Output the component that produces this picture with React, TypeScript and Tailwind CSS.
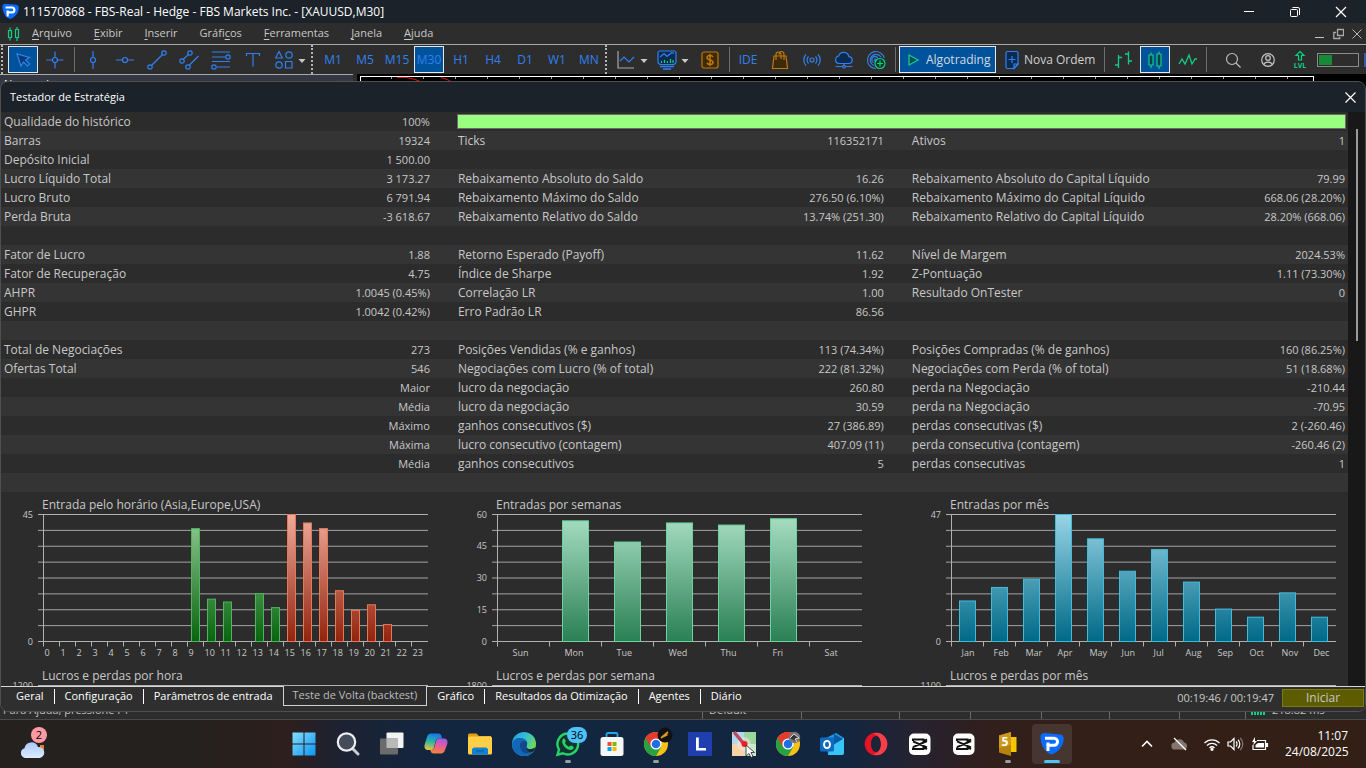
import React from "react";

type Kids = { children?: React.ReactNode };

const BLUE = "#2f81f0";
const GREEN = "#0fcf86";
const ORANGE = "#c27808";

/* ---------- toolbar ---------- */

function Glyph({ children, color = BLUE }: Kids & { color?: string }) {
  return (
    <svg width="24" height="24" viewBox="0 0 24 24" fill="none" stroke={color} strokeWidth="1.2" aria-hidden="true">
      {children}
    </svg>
  );
}

function Tool({ label, active, narrow, children }: Kids & { label: string; active?: boolean; narrow?: boolean }) {
  return (
    <div className={narrow ? "flex w-[29px] shrink-0 justify-center" : "flex w-8 shrink-0 justify-center"}>
      <button
        type="button"
        aria-label={label}
        className={
          active
            ? "flex h-[27px] w-[30px] items-center justify-center border border-gray-200 bg-[#00529b] text-[#2f81f0]"
            : "flex h-[27px] w-[29px] items-center justify-center text-[#2f81f0]"
        }
      >
        {children}
      </button>
    </div>
  );
}

function Caret() {
  return (
    <svg width="8" height="24" viewBox="0 0 8 24" className="shrink-0" aria-hidden="true">
      <path d="M0.5 11h7L4 15z" fill="#c9c9c9" />
    </svg>
  );
}

function Separator() {
  return <div className="ml-[3px] mr-[2px] h-[25px] w-px shrink-0 bg-[#6d6d6d]" />;
}

function Grip() {
  return <div className="h-[29px] w-0 shrink-0 border-l-2 border-dotted border-[#b5b5b5]" />;
}

const frames = ["M1", "M5", "M15", "M30", "H1", "H4", "D1", "W1", "MN"];

function Toolbar() {
  return (
    <div className="flex h-[29px] shrink-0 items-center overflow-hidden bg-[#2d2d2d] pl-px">
      <Grip />
      <div className="w-1 shrink-0" />
      <Tool label="Cursor" active>
        <Glyph><path d="M6 6l4 12 2.500-4 4 4 2-2-4-4 4-2.500z" fill="#0a3a70" /></Glyph>
      </Tool>
      <Tool label="Mira">
        <Glyph><path d="M12 3.500v6M12 14.500v6M3.500 12h6M14.500 12h6" /><circle cx="12" cy="12" r="2.500" /></Glyph>
      </Tool>
      <Separator />
      <Tool label="Linha vertical">
        <Glyph><path d="M12 3v6.500M12 14.500v6.500" /><circle cx="12" cy="12" r="2.500" /></Glyph>
      </Tool>
      <Tool label="Linha horizontal">
        <Glyph><path d="M3 12h6.500M14.500 12h6.500" /><circle cx="12" cy="12" r="2.500" /></Glyph>
      </Tool>
      <Tool label="Linha de tendência">
        <Glyph><path d="M6.500 17.500l11-11" /><circle cx="5" cy="19" r="2.200" /><circle cx="19" cy="5" r="2.200" /></Glyph>
      </Tool>
      <Tool label="Canal equidistante">
        <Glyph>
          <path d="M6 11.500l5.500-5M12.500 17l9-9" />
          <circle cx="5" cy="13" r="2.200" /><circle cx="13" cy="5" r="2.200" /><circle cx="11" cy="19" r="2.200" />
        </Glyph>
      </Tool>
      <Tool label="Fibonacci">
        <Glyph>
          <path d="M3 4h18M3 9h13.500M3 13.500h18M8 19h13" />
          <circle cx="19" cy="9" r="2.200" /><circle cx="5" cy="19" r="2.200" />
        </Glyph>
      </Tool>
      <Tool label="Texto">
        <Glyph><path d="M5.500 8V5.500h13V8M12 5.500V18.500" /></Glyph>
      </Tool>
      <Tool label="Objetos" narrow>
        <Glyph>
          <path d="M7 3.500l3.300 6.500H3.700zM13.500 13.500h6.500v6.500h-6.500z" />
          <circle cx="17" cy="7" r="3.200" /><circle cx="7" cy="17" r="3.200" />
        </Glyph>
      </Tool>
      <Caret />
      <div className="w-[5px] shrink-0" />
      <Grip />
      <div className="w-1 shrink-0" />
      {frames.map((f) => (
        <Tool key={f} label={f} active={f === "M30"}>
          <span className="text-[12px]">{f}</span>
        </Tool>
      ))}
      <Grip />
      <div className="w-1 shrink-0" />
      <Tool label="Tipo de gráfico" narrow>
        <Glyph><path d="M4 3v17h16" stroke="#a8a8a8" /><path d="M6 13l4-4 5 5 5-5" /></Glyph>
      </Tool>
      <Caret />
      <div className="w-1 shrink-0" />
      <Tool label="Indicadores" narrow>
        <Glyph>
          <path d="M3 5a2 2 0 012-2h14a2 2 0 012 2v9.500c0 1-2 2-3 2H6c-1 0-3-1-3-2z" fill="#0b2c50" />
          <path d="M5 9l4-3.500 3 3 5-4 2 1" />
          <path d="M6.500 15v-2M9.500 15v-3M12.500 15v-2M15.500 15v-4M18 15v-3" stroke={GREEN} />
          <path d="M5 18.500h14M8 21h8" strokeWidth="1.600" />
        </Glyph>
      </Tool>
      <Caret />
      <div className="w-[5px] shrink-0" />
      <Tool label="Cotações">
        <Glyph color={ORANGE}>
          <rect x="4" y="4" width="16" height="16" rx="2" fill="#3d2a08" />
          <path d="M15 9c-.5-1-1.500-1.500-3-1.500S9 8.300 9 9.700c0 3 6 1.500 6 4.500 0 1.500-1.500 2.300-3 2.300S9.300 16 9 14.800M12 5.800v12.400" strokeWidth="1.500" />
        </Glyph>
      </Tool>
      <Separator />
      <Tool label="IDE"><span className="text-[12px]">IDE</span></Tool>
      <Tool label="Mercado">
        <Glyph color={ORANGE}>
          <path d="M6 8h12l1.500 12.500h-15z" fill="#3d2a08" />
          <path d="M8 12V6.500a2.500 2.500 0 015 0V11M11 6.500c0-4 5-4 5 0V12" />
        </Glyph>
      </Tool>
      <Tool label="Sinais">
        <Glyph>
          <circle cx="12" cy="12" r="2" />
          <path d="M8.500 8.500a5 5 0 000 7M15.500 8.500a5 5 0 010 7M6 6.500a8 8 0 000 11M18 6.500a8 8 0 010 11" />
        </Glyph>
      </Tool>
      <Tool label="Hospedagem virtual">
        <Glyph>
          <path d="M7 15.500a3.800 3.800 0 01-.3-7.500 5.300 5.300 0 0110.200.6A3.500 3.500 0 0117.500 15.500z" fill="#0b2c50" />
          <path d="M12 15.500v2M3.500 18.500h7M13.500 18.500h7" /><circle cx="12" cy="18.700" r="1.300" />
        </Glyph>
      </Tool>
      <Tool label="Cópia de sinais">
        <Glyph>
          <path d="M12 20.500A8.500 8.500 0 1120.200 10M10 17.500a5.800 5.800 0 117-8.500M9.500 14.500a3.200 3.200 0 114.500-4" />
          <circle cx="11.500" cy="12" r="1" />
          <circle cx="16" cy="15.500" r="5" stroke={GREEN} fill="#0c3a29" />
          <path d="M16 12.500v6M13 15.500h6" stroke={GREEN} />
        </Glyph>
      </Tool>
      <Separator />
      <button
        type="button"
        className="ml-px flex h-[27px] w-[97px] shrink-0 items-center gap-[6px] border border-gray-200 bg-[#00529b] pl-[7px] text-[12px] text-[#d5dbe0]"
      >
        <svg width="13" height="14" viewBox="0 0 13 14" fill="#0d4a57" stroke={GREEN} strokeWidth="1.300" aria-hidden="true">
          <path d="M2 2l9 5-9 5z" />
        </svg>
        Algotrading
      </button>
      <button type="button" className="ml-1 flex h-[27px] w-[101px] shrink-0 items-center text-[12px] text-[#d0d0d0]">
        <Glyph>
          <path d="M6 5a1.500 1.500 0 011.500-1.500h9A1.500 1.500 0 0118 5v11l-4 4.500H7.500A1.500 1.500 0 016 19z" fill="#0b2c50" />
          <path d="M18 16h-4v4.500zM12 8v7M8.500 11.500h7" />
        </Glyph>
        Nova Ordem
      </button>
      <Separator />
      <Tool label="Gráfico de barras">
        <Glyph color={GREEN}><path d="M7.500 7v13M4 17h3.500M7.500 9.500H11M17.500 3.500v13M14 6h3.500M17.500 13H21" strokeWidth="1.300" /></Glyph>
      </Tool>
      <Tool label="Gráfico de velas" active>
        <Glyph color={GREEN}>
          <path d="M6 7h4v10H6zM14 6h4v12h-4z" fill="#0b3f53" /><path d="M8 4.500V7M8 17v3M16 3.500V6M16 18v3" />
        </Glyph>
      </Tool>
      <Tool label="Gráfico de linha">
        <Glyph color={GREEN}><path d="M4 16l3-5 3 5 4-9 3 9 3-5h2" strokeWidth="1.300" /></Glyph>
      </Tool>
      <Separator />
      <div className="w-2 shrink-0" />
      <Tool label="Pesquisar">
        <Glyph color="#bdbdbd"><circle cx="11" cy="11" r="5.500" /><path d="M15 15l4.500 4.500" /></Glyph>
      </Tool>
      <div className="w-[3px] shrink-0" />
      <Tool label="Conta">
        <Glyph color="#c4c4c4"><circle cx="12" cy="12" r="6.300" /><circle cx="12" cy="10" r="2.300" /><path d="M7.800 16.500c1-3.300 7.400-3.300 8.400 0" /></Glyph>
      </Tool>
      <Tool label="Nível">
        <svg width="24" height="24" viewBox="0 0 24 24" fill="none" stroke={GREEN} strokeWidth="1.200" aria-hidden="true">
          <path d="M12 3.500l4 4h-2.500V12h-3V7.500H8z" fill="#0c3a29" />
          <text x="12" y="20" textAnchor="middle" fontSize="7" fill={GREEN} stroke="none" fontWeight="700">LVL</text>
        </svg>
      </Tool>
      <div className="ml-px h-[14px] w-[42px] shrink-0 border border-[#8b8b8b] p-px">
        <div className="h-full w-[35%] bg-[#178a3a]" />
      </div>
      <div className="ml-auto h-[14px] w-[2px] bg-[#2d5ea5]" />
    </div>
  );
}

/* ---------- title and menu ---------- */

function Shield({ size }: { size: number }) {
  return (
    <svg width={size} height={size} viewBox="0 0 24 24" aria-hidden="true">
      <path d="M.5 4.500C.5 2 2.500.8 5 1l15 1.500c3 .3 4 2.500 3.600 5.500-.8 6-4.600 12-12.100 14.500C4.500 21 .5 12 .5 4.500z" fill="#0a6bff" />
      <path d="M5 6.300h9c4.700 0 4.700 7 0 7H8v5.700" fill="none" stroke="#fff" strokeWidth="3" />
      <path d="M6.500 10.500h3v3h-3z" fill="#fff" />
    </svg>
  );
}

function TitleBar() {
  return (
    <header className="flex h-[23px] shrink-0 items-center bg-[#1b222a] px-[2px] text-white">
      <Shield size={17} />
      <h1 className="ml-1 text-[12px]">111570868 - FBS-Real - Hedge - FBS Markets Inc. - [XAUUSD,M30]</h1>
      <div className="ml-auto flex items-center">
        <button type="button" aria-label="Minimizar" className="flex w-[46px] justify-center">
          <svg width="12" height="12" viewBox="0 0 12 12" stroke="#fff"><path d="M1 5.500h10" /></svg>
        </button>
        <button type="button" aria-label="Restaurar" className="flex w-[46px] justify-center">
          <svg width="12" height="12" viewBox="0 0 12 12" stroke="#fff" fill="none"><rect x="1.500" y="3.500" width="7" height="7" rx="1" /><path d="M3.500 1.500H9a1.500 1.500 0 011.500 1.500v6" /></svg>
        </button>
        <button type="button" aria-label="Fechar" className="flex w-[46px] justify-center">
          <svg width="12" height="12" viewBox="0 0 12 12" stroke="#fff" strokeWidth="1.200"><path d="M1 1l10 10M11 1L1 11" /></svg>
        </button>
      </div>
    </header>
  );
}

const menus: [string, string, string][] = [
  ["", "A", "rquivo"], ["", "E", "xibir"], ["", "I", "nserir"], ["Gráfi", "c", "os"],
  ["", "F", "erramentas"], ["", "J", "anela"], ["", "A", "juda"],
];

function MenuBar() {
  return (
    <nav className="flex h-[22px] shrink-0 items-center border-b border-[#a9a9a9] bg-[#2d2d2d] pl-[7px] pr-1 text-[11px] text-[#c8c8c8]">
      <svg width="13" height="14" viewBox="0 0 13 14" fill="none" stroke={GREEN} strokeWidth="1.200" aria-hidden="true">
        <path d="M1.500 3.500h3v7h-3zM8.500 2.500h3v8h-3zM3 .5v3M3 10.500v3M10 0v2.500M10 10.500V14" />
      </svg>
      <div className="ml-3 flex gap-[22px]">
        {menus.map(([a, u, b]) => (
          <button type="button" key={a + u + b}>
            {a}<span className="underline underline-offset-2">{u}</span>{b}
          </button>
        ))}
      </div>
      <div className="ml-auto flex items-center gap-2">
        <button type="button" aria-label="Minimizar gráfico">
          <svg width="11" height="12" viewBox="0 0 11 12" stroke="#c4c4c4"><path d="M1 9.500h9" /></svg>
        </button>
        <button type="button" aria-label="Restaurar gráfico">
          <svg width="11" height="12" viewBox="0 0 11 12" fill="none" stroke="#a9a9a9" strokeWidth="1.300"><path d="M4.500 1.500h6v6h-6zM3 4.500H.8v6h6V9" /></svg>
        </button>
        <button type="button" aria-label="Fechar gráfico">
          <svg width="10" height="12" viewBox="0 0 10 12" stroke="#b4b4b4"><path d="M.5 1.500l9 9M9.500 1.500l-9 9" /></svg>
        </button>
      </div>
    </nav>
  );
}

/* ---------- report ---------- */

type Row = [string, string, string, string, string, string];

const rows: Row[] = [
  ["Barras", "19324", "Ticks", "116352171", "Ativos", "1"],
  ["Depósito Inicial", "1 500.00", "", "", "", ""],
  ["Lucro Líquido Total", "3 173.27", "Rebaixamento Absoluto do Saldo", "16.26", "Rebaixamento Absoluto do Capital Líquido", "79.99"],
  ["Lucro Bruto", "6 791.94", "Rebaixamento Máximo do Saldo", "276.50 (6.10%)", "Rebaixamento Máximo do Capital Líquido", "668.06 (28.20%)"],
  ["Perda Bruta", "-3 618.67", "Rebaixamento Relativo do Saldo", "13.74% (251.30)", "Rebaixamento Relativo do Capital Líquido", "28.20% (668.06)"],
  ["", "", "", "", "", ""],
  ["Fator de Lucro", "1.88", "Retorno Esperado (Payoff)", "11.62", "Nível de Margem", "2024.53%"],
  ["Fator de Recuperação", "4.75", "Índice de Sharpe", "1.92", "Z-Pontuação", "1.11 (73.30%)"],
  ["AHPR", "1.0045 (0.45%)", "Correlação LR", "1.00", "Resultado OnTester", "0"],
  ["GHPR", "1.0042 (0.42%)", "Erro Padrão LR", "86.56", "", ""],
  ["", "", "", "", "", ""],
  ["Total de Negociações", "273", "Posições Vendidas (% e ganhos)", "113 (74.34%)", "Posições Compradas (% de ganhos)", "160 (86.25%)"],
  ["Ofertas Total", "546", "Negociações com Lucro (% of total)", "222 (81.32%)", "Negociações com Perda (% of total)", "51 (18.68%)"],
  ["", "Maior", "lucro da negociação", "260.80", "perda na Negociação", "-210.44"],
  ["", "Média", "lucro da negociação", "30.59", "perda na Negociação", "-70.95"],
  ["", "Máximo", "ganhos consecutivos ($)", "27 (386.89)", "perdas consecutivas ($)", "2 (-260.46)"],
  ["", "Máxima", "lucro consecutivo (contagem)", "407.09 (11)", "perda consecutiva (contagem)", "-260.46 (2)"],
  ["", "Média", "ganhos consecutivos", "5", "perdas consecutivas", "1"],
  ["", "", "", "", "", ""],
];

function Report() {
  return (
    <table className="w-full table-fixed border-collapse whitespace-nowrap text-[11px] leading-[19px]">
      <colgroup>
        <col className="w-[21%]" />
        <col className="w-[12.7%]" />
        <col className="w-[21%]" />
        <col className="w-[12.7%]" />
        <col className="w-[21%]" />
        <col />
      </colgroup>
      <tbody>
        <tr className="h-[19px]">
          <th scope="row" className="pl-[3px] text-left text-[12px] font-normal">Qualidade do histórico</th>
          <td className="pr-[25px] text-right">100%</td>
          <td colSpan={4} className="pl-[2px] pr-[2px]">
            <div className="h-[15px] border border-[#6a6a6a] bg-[#98ff80]" />
          </td>
        </tr>
        {rows.map((r, i) => (
          <tr key={i} className="h-[19px] odd:bg-[#2c2c2c] even:bg-[#343434]">
            <th scope="row" className="pl-[3px] text-left text-[12px] font-normal">{r[0]}</th>
            <td className="pr-[25px] text-right">{r[1]}</td>
            <td className="pl-[3px] text-[12px]">{r[2]}</td>
            <td className="pr-[25px] text-right">{r[3]}</td>
            <td className="pl-[3px] text-[12px]">{r[4]}</td>
            <td className="pr-[3px] text-right">{r[5]}</td>
          </tr>
        ))}
      </tbody>
    </table>
  );
}

/* ---------- charts ---------- */

type Tone = { id: string; top: string; bottom: string; edge: string };
type Bar = { label: string; value: number; tone?: Tone };

const green: Tone = { id: "tone-green", top: "#93cc97", bottom: "#08640f", edge: "#4db65a" };
const red: Tone = { id: "tone-red", top: "#efab9c", bottom: "#93230c", edge: "#e8775a" };
const mint: Tone = { id: "tone-mint", top: "#a9dfc4", bottom: "#2a8054", edge: "#6bd39c" };
const cyan: Tone = { id: "tone-cyan", top: "#96d5e5", bottom: "#006988", edge: "#45b9dc" };

const TOP = 22.5;
const SPAN = 127;

type ChartProps = {
  title: string; bars: Bar[]; tone: Tone; step: number; inset: number; labelInset: number; max: number; ticks: number[];
};

function Chart({ title, bars, tone, step, inset, labelInset, max, ticks }: ChartProps) {
  const x0 = 42.5;
  const end = x0 + bars.length * step;
  const base = TOP + SPAN;
  return (
    <svg width="440" height="171" viewBox="0 0 440 171" className="block" fill="#c8c8c8" fontSize="9" role="img" aria-label={title}>
      <defs>
        {[green, red, mint, cyan].map((t) => (
          <linearGradient key={t.id} id={t.id} gradientUnits="userSpaceOnUse" x1="0" y1={TOP} x2="0" y2={base}>
            <stop offset="0" stopColor={t.top} />
            <stop offset="1" stopColor={t.bottom} />
          </linearGradient>
        ))}
      </defs>
      <text x="41" y="17" fontSize="12">{title}</text>
      {Array.from({ length: 9 }, (_, i) => (
        <path key={i} d={`M37 ${TOP + (i * SPAN) / 8}H${end + 0.5}`} stroke={i === 0 || i === 8 ? "#b0b0b0" : "#a4a4a4"} />
      ))}
      <path d={`M${x0} ${TOP}V${base}`} stroke="#b0b0b0" />
      {ticks.map((t) => (
        <text key={t} x="32" y={base + 3 - (t / max) * SPAN} textAnchor="end">{t}</text>
      ))}
      {bars.map((b, i) => {
        const x = x0 + i * step;
        const t = b.tone ?? tone;
        const h = (b.value / max) * SPAN;
        return (
          <g key={i}>
            <path d={`M${x} ${base}v5`} stroke="#b0b0b0" />
            {b.value > 0 && (
              <rect x={x + inset} y={base - h} width={step - 2 * inset} height={h} fill={`url(#${t.id})`} stroke={t.edge} />
            )}
            {b.label && <text x={x + labelInset} y="164">{b.label}</text>}
          </g>
        );
      })}
    </svg>
  );
}

const hourValues = [0, 0, 0, 0, 0, 0, 0, 0, 0, 40, 15, 14, 0, 17, 12, 45, 42, 40, 18, 11, 13, 6, 0, 0];
const hours: Bar[] = hourValues.map((value, i) => ({ label: String(i), value, tone: i >= 15 ? red : green }));
const toBars = (names: string[], values: number[]): Bar[] => names.map((label, i) => ({ label, value: values[i] ?? 0 }));
const emptyBars = (n: number): Bar[] => Array.from({ length: n }, () => ({ label: "", value: 0 }));
const days = ["Sun", "Mon", "Tue", "Wed", "Thu", "Fri", "Sat"];
const months = ["Jan", "Feb", "Mar", "Apr", "May", "Jun", "Jul", "Aug", "Sep", "Oct", "Nov", "Dec"];

const charts: ChartProps[] = [
  { title: "Entrada pelo horário (Asia,Europe,USA)", bars: hours, tone: green, step: 16, inset: 4, labelInset: 1, max: 45, ticks: [45, 0] },
  { title: "Entradas por semanas", bars: toBars(days, [0, 57, 47, 56, 55, 58, 0]), tone: mint, step: 52, inset: 13, labelInset: 15, max: 60, ticks: [60, 45, 30, 15, 0] },
  { title: "Entradas por mês", bars: toBars(months, [15, 20, 23, 47, 38, 26, 34, 22, 12, 9, 18, 9]), tone: cyan, step: 32, inset: 8, labelInset: 10, max: 47, ticks: [47, 0] },
  { title: "Lucros e perdas por hora", bars: emptyBars(24), tone: green, step: 16, inset: 4, labelInset: 1, max: 1200, ticks: [1200] },
  { title: "Lucros e perdas por semana", bars: emptyBars(7), tone: mint, step: 52, inset: 13, labelInset: 15, max: 1800, ticks: [1800] },
  { title: "Lucros e perdas por mês", bars: emptyBars(12), tone: cyan, step: 32, inset: 8, labelInset: 10, max: 1100, ticks: [1100] },
];

/* ---------- strategy tester dialog ---------- */

const tabs = [
  "Geral", "Configuração", "Parâmetros de entrada", "Teste de Volta (backtest)", "Gráfico",
  "Resultados da Otimização", "Agentes", "Diário",
];
const activeTab = 3;

function Tester() {
  return (
    <section
      aria-label="Testador de Estratégia"
      className="absolute inset-x-0 bottom-2 top-[7px] flex flex-col overflow-hidden rounded-lg border border-[#505050] bg-[#2c2c2c] text-[#c8c8c8]"
    >
      <div className="flex h-[30px] shrink-0 items-center bg-[#1b222a] pl-[9px] pr-[9px] text-white">
        <h2 className="text-[11px]">Testador de Estratégia</h2>
        <button type="button" aria-label="Fechar testador" className="ml-auto">
          <svg width="11" height="11" viewBox="0 0 11 11" stroke="#fff" strokeWidth="1.200" className="block"><path d="M.5.5l10 10M10.500.5l-10 10" /></svg>
        </button>
      </div>
      <div className="flex min-h-0 flex-1">
        <div className="min-w-0 flex-1 overflow-hidden">
          <Report />
          <div className="grid grid-cols-[33.7%_33.7%_32.6%] overflow-hidden">
            {charts.map((c) => <Chart key={c.title} {...c} />)}
          </div>
        </div>
        <div className="flex w-[17px] shrink-0 justify-center bg-[#181818] pt-[17px]">
          <div className="h-[38%] w-[2px] bg-[#9a9a9a]" />
        </div>
      </div>
      <div className="flex h-[25px] shrink-0 items-start border-t border-[#d8d8d8] bg-[#2f2f2f] pl-[5px]">
        <div role="tablist" className="flex text-[11px] text-white">
          {tabs.map((t, i) =>
            i === activeTab ? (
              <button key={t} type="button" role="tab" aria-selected="true" className="-mt-px h-5 border-x border-b border-[#d0d0d0] bg-[#2c2c2c] px-[9px] text-[#bdbdbd]">
                {t}
              </button>
            ) : (
              <div key={t} className="flex items-center">
                <button type="button" role="tab" aria-selected="false" className="h-[19px] px-[10px]">{t}</button>
                {i !== activeTab - 1 && i !== tabs.length - 1 && <div className="h-[15px] w-px bg-white" />}
              </div>
            )
          )}
        </div>
        <div className="ml-auto mt-[2px] flex items-center pr-px text-[12px]">
          <span className="pr-2 text-[11px]">00:19:46 / 00:19:47</span>
          <button type="button" className="flex h-[18px] w-[82px] items-center justify-center border border-[#7c7c00] bg-[#5e5c00]">Iniciar</button>
        </div>
      </div>
    </section>
  );
}

/* ---------- workspace behind the dialog ---------- */

function Workspace() {
  return (
    <main className="relative flex min-h-0 flex-1 flex-col bg-[#2d2d2d]">
      <div className="flex min-h-0 flex-1 gap-1">
        <div className="flex w-[353px] shrink-0 items-start justify-between overflow-hidden border-t border-[#a9a9a9] bg-[#343843] pl-1 pr-[5px] text-[11px] leading-[18px] text-white">
          Navegador <span>✕</span>
        </div>
        <div className="flex-1 overflow-hidden bg-black pl-[3px] pr-[52px] pt-[2px]">
          <div className="h-full border-x border-t border-white">
            <svg width="952" height="6" viewBox="0 0 952 6" fill="none" aria-hidden="true">
              {Array.from({ length: 29 }, (_, i) => <path key={i} d={`M${30.5 + i * 32} 0v2`} stroke="#aaa" />)}
              <path d="M36 .5h10l8 2 8 3M80 .5l6 2 6 3" stroke="#f00" />
            </svg>
          </div>
        </div>
      </div>
      <footer className="flex h-5 shrink-0 overflow-hidden border-b border-[#4a4a4a] text-[12px] leading-5 text-[#c0c0c0]">
        <span className="flex-1 pl-[3px] text-[11px]">Para Ajuda, pressione F1</span>
        <span className="w-[99px] border-l border-[#6a6a6a] pl-[6px] text-[11px]">Default</span>
        <span className="w-[98px] border-l border-[#6a6a6a]" />
        <span className="w-[71px] border-l border-[#6a6a6a]" />
        <span className="w-[71px] border-l border-[#6a6a6a]" />
        <span className="w-[68px] border-l border-[#6a6a6a]" />
        <span className="w-[70px] border-l border-[#6a6a6a]" />
        <span className="w-[66px] border-l border-[#6a6a6a]" />
        <span className="flex w-[121px] items-center gap-[6px] border-l border-[#6a6a6a] pl-[5px] text-[11px]">
          <svg width="15" height="12" viewBox="0 0 15 12" stroke={GREEN} strokeWidth="2"><path d="M1 7v4M4 6v5M7 4v7M10 2v9M13 0v11" /></svg>
          218.82 ms
        </span>
      </footer>
      <Tester />
    </main>
  );
}

/* ---------- taskbar ---------- */

function Chrome() {
  return (
    <>
      <circle cx="12" cy="12" r="12" fill="#fbc116" />
      <path d="M12 12L1.600 6A12 12 0 0122.400 6z" fill="#e33b2e" />
      <path d="M12 12L1.600 6A12 12 0 0012 24l5.200-9z" fill="#27a243" />
      <path d="M12 6h10.400A12 12 0 001.600 6l5.200 9z" fill="#e33b2e" />
      <circle cx="12" cy="12" r="5.600" fill="#fff" />
      <circle cx="12" cy="12" r="4.300" fill="#1d6fe8" />
    </>
  );
}

function CapCut() {
  return (
    <>
      <rect x="1" y="1.500" width="21.500" height="21.500" rx="5" fill="#fff" />
      <path d="M5 9V7.500h10.500v1.800L19 7.300M5 15.500V17h10.500v-1.800l3.500 2M5 9.300l14 6.200M5 15.200L19 9" fill="none" stroke="#111" strokeWidth="2" />
    </>
  );
}

const apps: { name: string; dot?: boolean; badge?: string; focused?: boolean; art: React.ReactNode }[] = [
  { name: "Iniciar Windows", art: <g fill="url(#g-win)"><path d="M.5.5h11v11H.5zM12.500.5h11v11h-11zM.5 12.500h11v11H.5zM12.500 12.500h11v11h-11z" /></g> },
  { name: "Pesquisa", art: <><path d="M17 17l5 5" stroke="#c9ccd3" strokeWidth="3" strokeLinecap="round" /><circle cx="10.500" cy="10" r="8.700" fill="#444b59" stroke="#eceef0" strokeWidth="2.200" /></> },
  { name: "Visão de tarefas", art: <><rect x="6.500" y=".5" width="17" height="15.500" rx="1" fill="#f3f3f3" /><rect y="6.500" width="18" height="16" rx="1" fill="#6b6b6b" /><path d="M6.500 6.500H18V16H6.500z" fill="#b9b9b9" /></> },
  { name: "Copilot", art: <><path d="M7 1.500h7c2.500 0 3 1 3.500 3l.5 2h-3.500c-2 0-2.500 1-3 3l-1.500 6c-.6 2-1.500 2.500-3.500 2.500H4c-3 0-4-2.500-3.300-5.500L3 5c.6-2 2-3.500 4-3.500z" fill="url(#g-cop1)" /><path d="M17 21.500h-7c-2.500 0-3-1-3.500-3l-.2-.7c2.500.2 3.700-.8 4.200-2.800l1.500-6c.6-2 1.500-2.500 3.500-2.500H20c3 0 4 2.500 3.300 5.500L21 18c-.6 2-2 3.500-4 3.500z" fill="url(#g-cop2)" /></> },
  { name: "Explorador de Arquivos", art: <><path d="M0 3a1.500 1.500 0 011.500-1.500h7L11 4h12v6H0z" fill="#e0a10c" /><rect y="4.500" width="24" height="18" rx="1.500" fill="#ffcf48" /><path d="M4 22.500V18a2.500 2.500 0 012.500-2.500h11A2.500 2.500 0 0120 18v4.500z" fill="#1080d4" /><path d="M8 19h8" stroke="#075a9c" /></> },
  { name: "Edge", art: <><circle cx="12" cy="12" r="12" fill="url(#g-edge)" /><path d="M0 12c1-5 5-6.500 9-6 5 .5 7 4 6 7-.7 1.500-1 3.500 2 4 2.500.4 4.500-.5 6-1.500C21 21.500 17 24 12 24 5 24 0 19 0 12z" fill="#1267b8" /><path d="M8 13c0-2.500 2-4 4-4 2.500 0 3.500 2 3 4-.7 1.500-1 3.500 2 4 2 .3 3.700 0 5-.8-3 4.300-6 5.300-9 4.800-3-.6-5-4-5-8z" fill="#114a8b" /><path d="M15 13c-1.500 3 .5 4.500 3 4.300 2.500 0 5-1.500 5.500-2.300l-1.500 4-3 1.500c-4-1-5.500-4-4-7.500z" fill="#14283e" /></> },
  { name: "WhatsApp", dot: true, badge: "36", art: <><path d="M12 1.500a10.500 10.500 0 00-9 16L1.500 22.700l5.300-1.400A10.500 10.500 0 1012 1.500z" fill="#12352f" stroke="#25d366" strokeWidth="2.400" /><path d="M8 6.500c1 0 1.500 2 1.800 2.800.2.700-1 1.300-.8 1.800.8 1.600 2.300 3 4 3.700.7.200 1.300-1.500 2-1.200 1 .4 2.700 1.200 2.700 1.700 0 2-2 3-3.700 2.700C10 17.200 6.500 13.500 6.200 9.700 6.100 8 7 6.500 8 6.500z" fill="#25d366" /></> },
  { name: "Microsoft Store", art: <><path d="M6.500 6V2.500A1.500 1.500 0 018 1h8a1.500 1.500 0 011.500 1.500V6" fill="none" stroke="#22a7ec" strokeWidth="1.800" /><rect x=".5" y="5" width="23" height="19" rx="2.500" fill="#f7f7f7" /><path d="M7.500 10h4v4h-4z" fill="#f25022" /><path d="M12.500 10h4v4h-4z" fill="#7fba00" /><path d="M7.500 15h4v4h-4z" fill="#00a4ef" /><path d="M12.500 15h4v4h-4z" fill="#ffb900" /></> },
  { name: "Chrome", dot: true, art: <><Chrome /><circle cx="21" cy="3" r="7.500" fill="#111" /><path d="M17 6l7-6M18.500 5l5-2.500" stroke="#d69a28" strokeWidth="1.700" /></> },
  { name: "Lightshot", art: <><rect width="24" height="24" fill="#1f3fae" /><path d="M8 18.500V5.500h2.800V16H18v2.500z" fill="#fff" /></> },
  { name: "Gravador de cliques", art: <><rect width="24" height="24" fill="#f9d3a4" /><path d="M12 0h12v12H12z" fill="#9bd79c" /><path d="M0 0h12v12H0z" fill="#b4d6ef" /><path d="M12 12h12v12H12z" fill="#cfe6cb" /><circle cx="12" cy="12" r="7" fill="#f5e9e2" opacity=".5" /><path d="M2 0l10 12" stroke="#b84b5d" strokeWidth="3.500" /><circle cx="12.500" cy="12" r="3" fill="#f11d26" /><path d="M14 13v11l3-2.500 2 4 2-1-2-4h3.500z" fill="#fff" stroke="#222" strokeWidth=".8" /></> },
  { name: "Chrome perfil 2", art: <><Chrome /><circle cx="18.500" cy="5.500" r="5.700" fill="#777" /><path d="M14 6l4-4 5 4-4 1 2 3" stroke="#ddd" fill="#333" /></> },
  { name: "Outlook", art: <><path d="M6 6l10-5 8 5v14a3 3 0 01-3 3H8z" fill="#199be8" /><path d="M12 12l12-6v15a2 2 0 01-2 2H8z" fill="#36c5f5" /><path d="M14 2l9 5-10 6z" fill="#0c59a8" /><rect y="5.500" width="14" height="14" rx="1.500" fill="#0d6bc2" /><ellipse cx="7" cy="12.500" rx="3" ry="3.600" fill="none" stroke="#fff" strokeWidth="1.900" /></> },
  { name: "Opera", art: <><path fillRule="evenodd" d="M12 .7a11.300 11.300 0 100 22.600A11.300 11.300 0 1012 .7zm0 3.300c3 0 5 3.500 5 8s-2 8-5 8-5-3.500-5-8 2-8 5-8z" fill="#e81426" /><path d="M12 .7a11.300 11.300 0 010 22.600c-1.600 0-3-.4-4.300-1 1.500.5 3 .2 4.300-1 3-1.500 5-5 5-9.300S15 4.200 12 2.700c-1.300-1.200-2.800-1.500-4.300-1A11 11 0 0112 .7z" fill="#f5404c" /></> },
  { name: "CapCut", art: <CapCut /> },
  { name: "CapCut 2", art: <CapCut /> },
  { name: "MetaTrader 5", dot: true, art: <><path d="M12 5h8.500v15H12z" fill="#f7c600" /><path d="M3 3.500L15 0v24L3 20.500z" fill="#b5830e" /><path d="M3 3.500L15 0v13L3 16z" fill="#cf9a1c" /><text x="9" y="13.500" textAnchor="middle" fontSize="12" fontWeight="700" fill="#fff">5</text></> },
  { name: "FBS MetaTrader", focused: true, art: <Shield size={24} /> },
];

function Taskbar() {
  return (
    <footer className="flex h-12 shrink-0 items-center bg-[linear-gradient(90deg,#24211e_0%,#24211e_14%,#2d1f1d_21%,#1c2232_25%,#13263f_31%,#13263f_62%,#262230_67%,#301f1c_72%,#331f17_80%,#321f16_100%)] text-white">
      <svg width="0" height="0" aria-hidden="true">
        <defs>
          <linearGradient id="g-win" gradientUnits="userSpaceOnUse" x1="0" y1="0" x2="24" y2="24"><stop stopColor="#85dffc" /><stop offset="1" stopColor="#0b93f6" /></linearGradient>
          <linearGradient id="g-cop1" x1=".5" y1="0" x2=".3" y2="1"><stop stopColor="#1878e8" /><stop offset=".5" stopColor="#2bb5a5" /><stop offset="1" stopColor="#e8c43a" /></linearGradient>
          <linearGradient id="g-cop2" x1=".6" y1="0" x2=".4" y2="1"><stop stopColor="#9b5be8" /><stop offset=".5" stopColor="#ea5d94" /><stop offset="1" stopColor="#f4823b" /></linearGradient>
          <linearGradient id="g-edge" x1="0" y1="0" x2="1" y2=".6"><stop stopColor="#249fe0" /><stop offset=".5" stopColor="#35bfd0" /><stop offset="1" stopColor="#76dc4a" /></linearGradient>
          <linearGradient id="g-cloud" x1="0" y1="0" x2="0" y2="1"><stop stopColor="#a9c9f8" /><stop offset="1" stopColor="#dcebff" /></linearGradient>
        </defs>
      </svg>
      <div className="w-[282px] shrink-0 pl-5">
        <button type="button" aria-label="Clima" className="relative block h-8 w-8">
          <svg width="26" height="18" viewBox="0 0 26 18" className="mt-3">
            <path d="M20 4h4v5h-4z" fill="#e08032" />
            <path d="M5 17a5 5 0 01-.5-9.700A7 7 0 0118 6a5.600 5.600 0 012 11z" fill="url(#g-cloud)" />
          </svg>
          <span className="absolute left-[11px] top-[-1px] flex h-4 w-4 items-center justify-center rounded-full bg-[#ff9aa5] text-[11px] leading-4 text-black">2</span>
        </button>
      </div>
      <div className="flex">
        {apps.map((a) => (
          <button key={a.name} type="button" aria-label={a.name} className="relative flex h-12 w-11 items-center justify-center">
            <span className={a.focused ? "flex h-10 w-10 items-center justify-center rounded bg-white/10" : "flex h-10 w-10 items-center justify-center"}>
              <svg width="24" height="24" viewBox="0 0 24 24" overflow="visible" aria-hidden="true">{a.art}</svg>
            </span>
            {a.badge && (
              <span className="absolute left-[21px] top-[7px] flex h-4 w-5 items-center justify-center rounded-full bg-[#4cc2ff] text-[11px] text-black">{a.badge}</span>
            )}
            {a.dot && <span className="absolute bottom-[5px] h-[3px] w-[6px] rounded-full bg-[#9a9da3]" />}
            {a.focused && <span className="absolute bottom-[5px] h-[3px] w-4 rounded-full bg-[#4cc2ff]" />}
          </button>
        ))}
      </div>
      <div className="ml-auto flex items-center pr-[18px]">
        <svg width="12" height="8" viewBox="0 0 12 8" fill="none" stroke="#fff" strokeWidth="1.600"><path d="M1 6.500l5-5 5 5" /></svg>
        <svg width="18" height="14" viewBox="0 0 18 14" className="ml-[18px]">
          <path d="M4 12.500a3.500 3.500 0 01-.3-7A5 5 0 0113 5.500a3.600 3.600 0 01.5 7z" fill="#83756f" /><path d="M3 1l12 12" stroke="#fff" strokeWidth="1.300" />
        </svg>
        <svg width="18" height="14" viewBox="0 0 18 14" fill="none" stroke="#fff" strokeWidth="1.300" className="ml-[14px]">
          <path d="M1.500 6a10.500 10.500 0 0115 0M4 8.500a7 7 0 0110 0M6.500 11a3.600 3.600 0 015 0" /><circle cx="9" cy="12.300" r="1" fill="#fff" />
        </svg>
        <svg width="17" height="14" viewBox="0 0 17 14" fill="none" stroke="#fff" strokeWidth="1.200" className="ml-[6px]">
          <path d="M1 5h2.500L7 1.500v11L3.500 9H1zM9 4.500a3.500 3.500 0 010 5M11 2.700a6 6 0 010 8.600" /><path d="M13.300 1a8.500 8.500 0 010 12" stroke="#8a7b74" />
        </svg>
        <svg width="18" height="14" viewBox="0 0 18 14" fill="none" stroke="#fff" strokeWidth="1.200" className="ml-[7px]">
          <path d="M6 3.500h8.500v9H2V8" /><path d="M7 6h6v4.500H4.500V8z" fill="#fff" stroke="none" /><path d="M15 6.500h1.500v3H15z" fill="#fff" /><path d="M4 0L1 5h2l-1 3.500L6 4H4z" fill="#fff" stroke="none" />
        </svg>
        <div className="ml-4 w-[63px] text-right text-[12px] leading-4">
          <div>11:07</div>
          <div>24/08/2025</div>
        </div>
      </div>
    </footer>
  );
}

export default function App() {
  return (
    <div className="flex h-screen flex-col overflow-hidden bg-[#2d2d2d] font-['Open_Sans','Noto_Sans',sans-serif]">
      <TitleBar />
      <MenuBar />
      <Toolbar />
      <Workspace />
      <Taskbar />
    </div>
  );
}
